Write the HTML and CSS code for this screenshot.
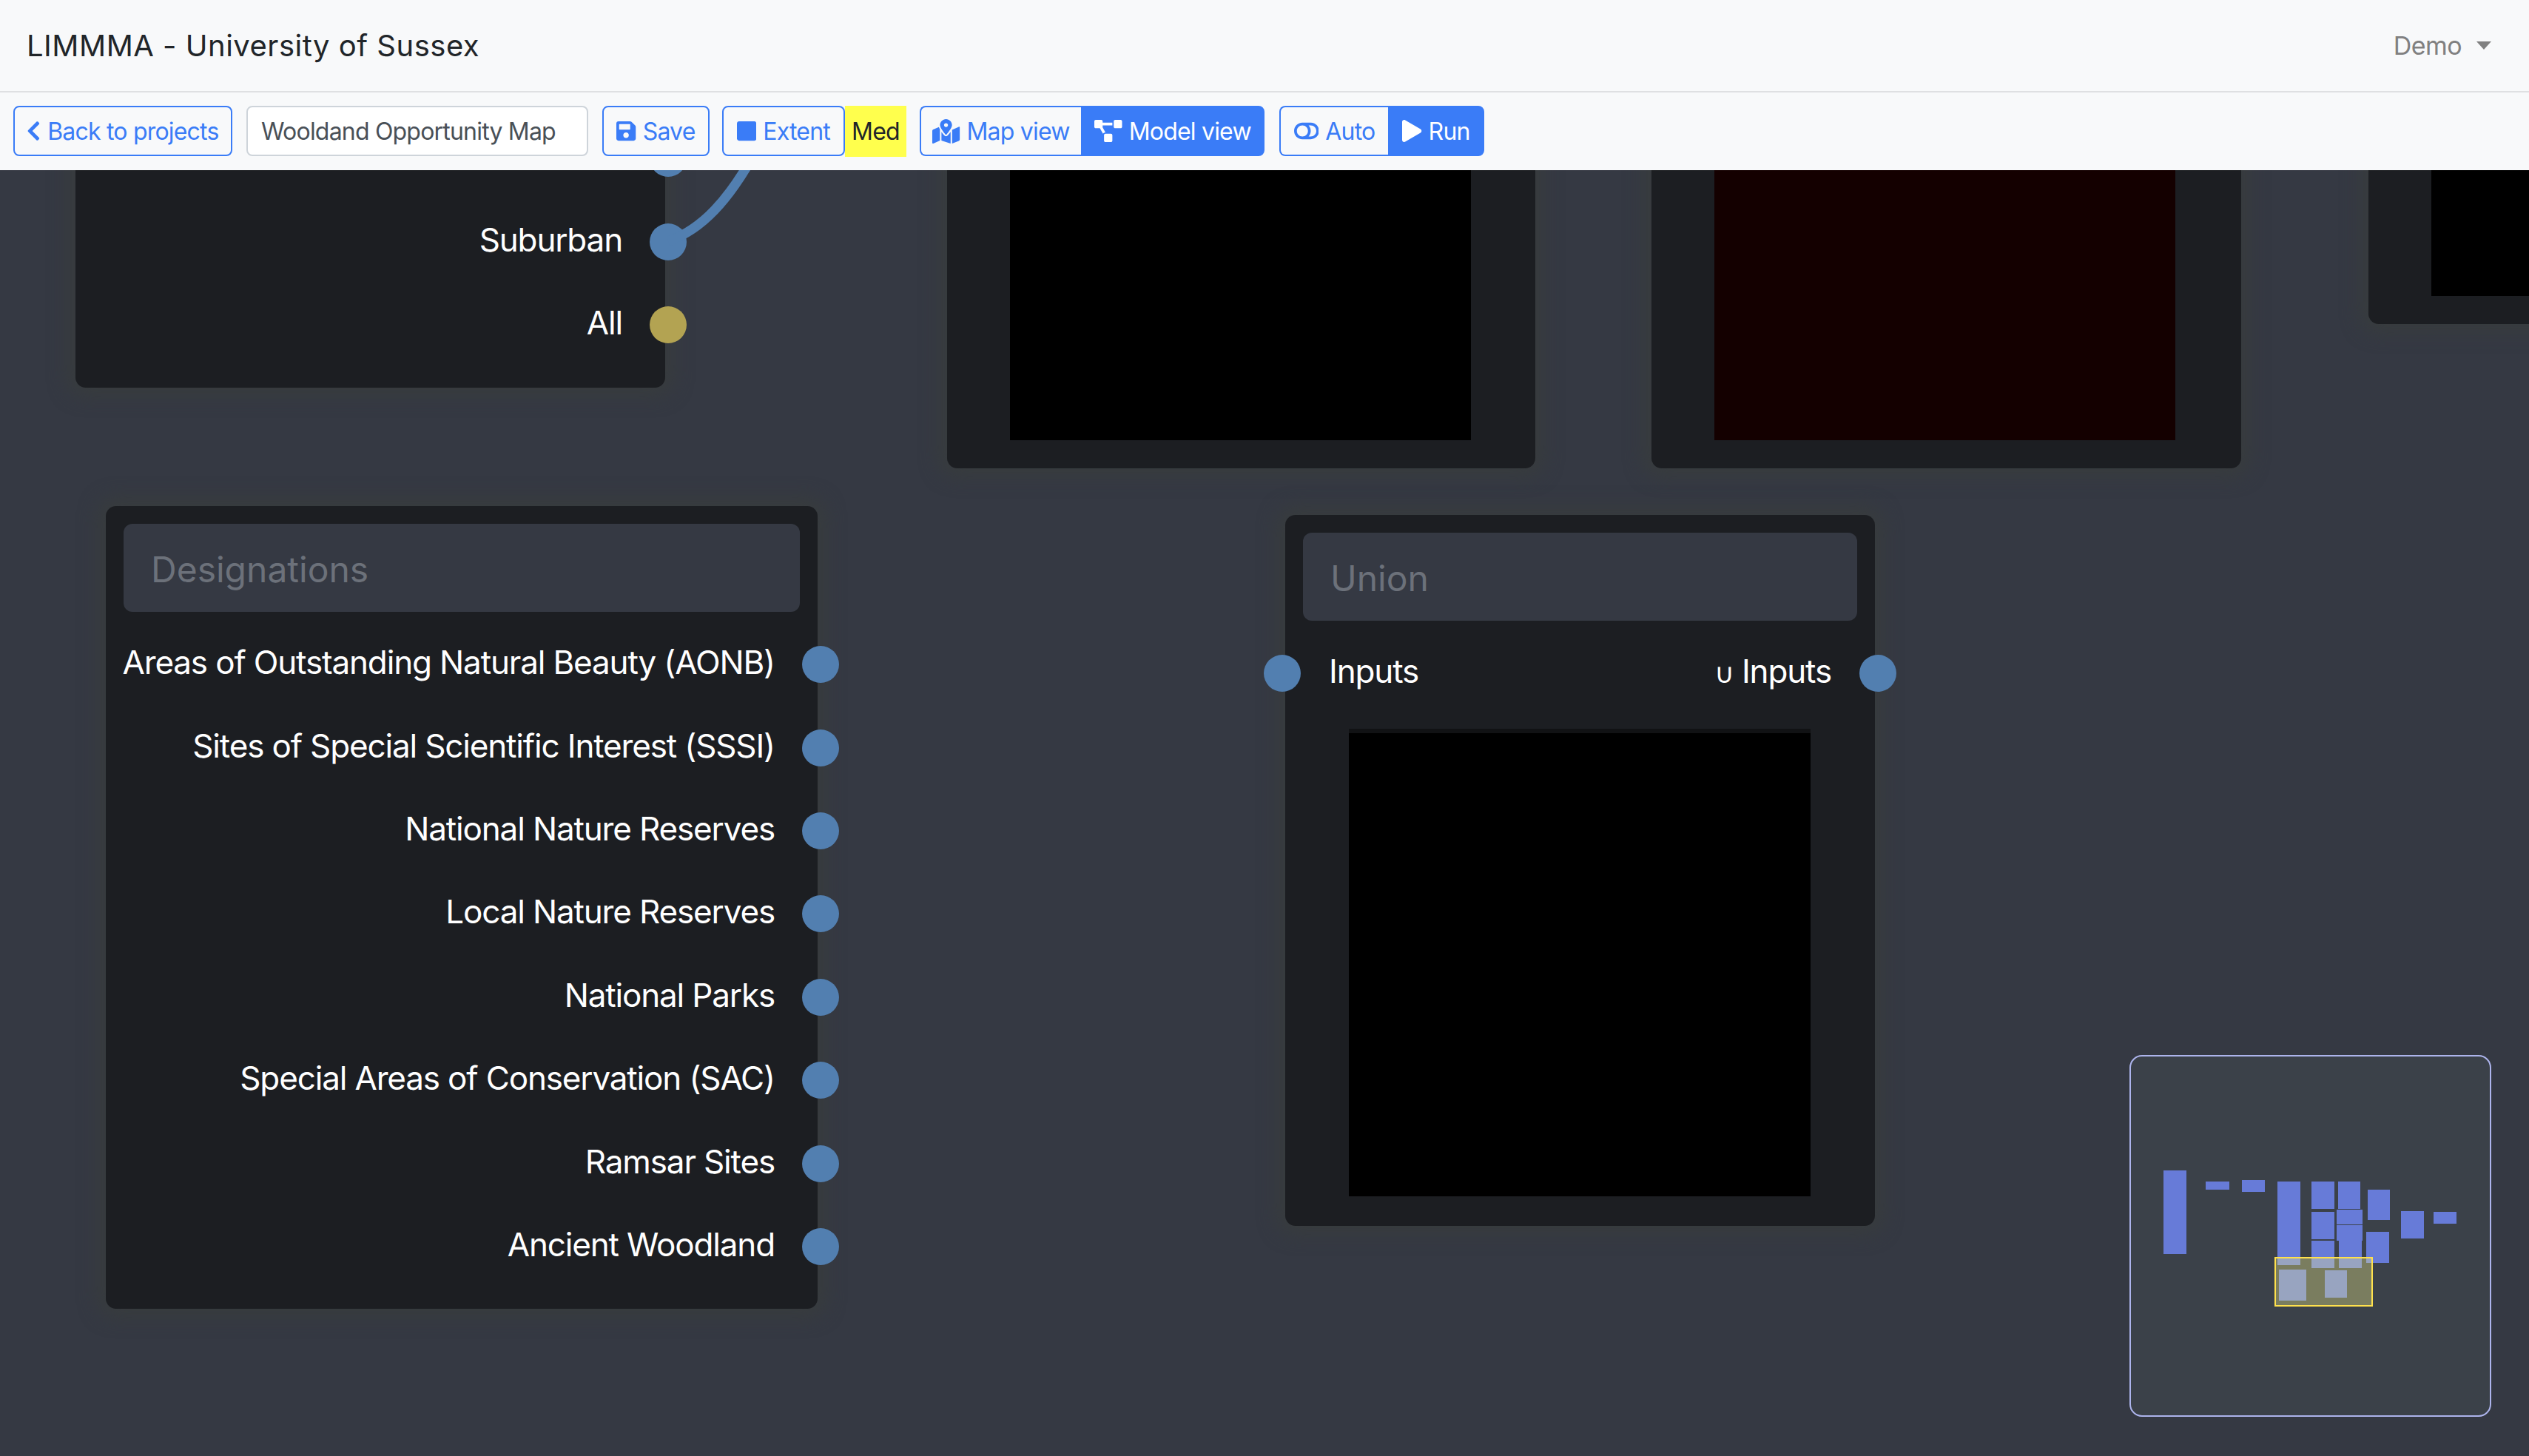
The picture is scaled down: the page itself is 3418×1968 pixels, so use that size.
FILE: index.html
```html
<!DOCTYPE html>
<html lang="en">
<head>
  <meta charset="UTF-8">
  <title>LIMMMA - University of Sussex</title>
  <link rel="stylesheet" href="styles.css">
</head>
<body>
  <nav class="navbar">
    <span class="brand">LIMMMA - University of Sussex</span>
    <span class="user-menu">Demo <i class="caret"></i></span>
  </nav>

  <div class="toolbar">
    <button class="btn btn-back">
      <svg class="icon" viewBox="0 0 320 512"><path d="M34.52 239.03L228.87 44.69c9.37-9.37 24.57-9.37 33.94 0l22.67 22.67c9.36 9.36 9.37 24.52.04 33.9L131.49 256l154.02 154.75c9.34 9.38 9.32 24.54-.04 33.9l-22.67 22.67c-9.37 9.37-24.57 9.37-33.94 0L34.52 272.97c-9.37-9.37-9.37-24.57 0-33.94z"/></svg>
      Back to projects
    </button>
    <input class="name-input" type="text" value="Wooldand Opportunity Map">
    <button class="btn btn-save">
      <svg class="icon" viewBox="0 0 448 512"><path d="M433.941 129.941l-83.882-83.882A48 48 0 0 0 316.118 32H48C21.49 32 0 53.49 0 80v352c0 26.51 21.49 48 48 48h352c26.51 0 48-21.49 48-48V163.882a48 48 0 0 0-14.059-33.941zM224 416c-35.346 0-64-28.654-64-64 0-35.346 28.654-64 64-64s64 28.654 64 64c0 35.346-28.654 64-64 64zm96-304.52V212c0 6.627-5.373 12-12 12H76c-6.627 0-12-5.373-12-12V108c0-6.627 5.373-12 12-12h228.52c3.183 0 6.235 1.264 8.485 3.515l3.48 3.48A11.996 11.996 0 0 1 320 111.48z"/></svg>
      Save
    </button>
    <div class="extent">
      <button class="btn btn-extent">
        <svg class="icon" viewBox="0 0 448 512"><path d="M400 32H48C21.5 32 0 53.5 0 80v352c0 26.5 21.5 48 48 48h352c26.5 0 48-21.5 48-48V80c0-26.5-21.5-48-48-48z"/></svg>
        Extent
      </button>
      <span class="badge-med">Med</span>
    </div>
    <div class="btn-group">
      <button class="btn btn-map">
        <svg class="icon icon-lg" viewBox="0 0 576 512"><path d="M288 0c-69.59 0-126 56.41-126 126 0 56.26 82.35 158.8 113.9 196.02 6.39 7.54 17.82 7.54 24.2 0C331.65 284.8 414 182.26 414 126 414 56.41 357.59 0 288 0zm0 168c-23.2 0-42-18.8-42-42s18.8-42 42-42 42 18.8 42 42-18.8 42-42 42zM20.12 215.95A32.006 32.006 0 0 0 0 245.66v250.32c0 11.32 11.43 19.06 21.94 14.86L160 448V214.92c-8.84-15.98-16.07-31.54-21.25-46.42L20.12 215.95zM288 359.67c-14.07 0-27.38-6.18-36.51-16.96-19.66-23.2-40.57-49.62-59.49-76.72V448l192 64V266c-18.92 27.09-39.82 53.52-59.49 76.72-9.13 10.77-22.44 16.95-36.51 16.95zm266.06-198.51L416 224v288l139.88-55.95A31.996 31.996 0 0 0 576 426.34V176.02c0-11.32-11.43-19.06-21.94-14.86z"/></svg>
        Map view
      </button>
      <button class="btn btn-model active">
        <svg class="icon" viewBox="0 0 640 512"><path d="M384 320H256c-17.67 0-32 14.33-32 32v128c0 17.67 14.33 32 32 32h128c17.67 0 32-14.33 32-32V352c0-17.67-14.33-32-32-32zM192 32c0-17.67-14.33-32-32-32H32C14.33 0 0 14.33 0 32v128c0 17.67 14.33 32 32 32h95.72l73.16 128.04C211.98 300.98 232.4 288 256 288h.28L192 175.51V128h224V64H192V32zM608 0H480c-17.67 0-32 14.33-32 32v128c0 17.67 14.33 32 32 32h128c17.67 0 32-14.33 32-32V32c0-17.67-14.33-32-32-32z"/></svg>
        Model view
      </button>
    </div>
    <div class="btn-group run-group">
      <button class="btn btn-auto">
        <svg class="icon" viewBox="0 0 576 512"><path d="M384 64H192C85.961 64 0 149.961 0 256s85.961 192 192 192h192c106.039 0 192-85.961 192-192S490.039 64 384 64zM64 256c0-70.741 57.249-128 128-128 70.741 0 128 57.249 128 128 0 70.741-57.249 128-128 128-70.741 0-128-57.249-128-128zm320 128h-48.896c65.215-72.938 65.195-183.084 0-256H384c70.741 0 128 57.249 128 128 0 70.741-57.249 128-128 128z"/></svg>
        Auto
      </button>
      <button class="btn btn-run active">
        <svg class="icon" viewBox="0 0 448 512"><path d="M424.4 214.7L72.4 6.6C43.8-10.3 0 6.1 0 47.9V464c0 37.5 40.7 60.1 72.4 41.3l352-208c31.4-18.5 31.5-64.1 0-82.6z"/></svg>
        Run
      </button>
    </div>
  </div>

  <main class="canvas">
    <div class="node node-classes">
      <div class="row row-out"><span class="port"></span></div>
      <div class="row row-out"><span class="label">Suburban</span><span class="port"></span></div>
      <div class="row row-out"><span class="label">All</span><span class="port port-all"></span></div>
    </div>

    <div class="node node-preview node-preview-a"><div class="preview"></div></div>
    <div class="node node-preview node-preview-b"><div class="preview preview-red"></div></div>
    <div class="node node-preview node-preview-c"><div class="preview"></div></div>

    <div class="node node-designations">
      <div class="node-title">Designations</div>
      <div class="row row-out"><span class="label">Areas of Outstanding Natural Beauty (AONB)</span><span class="port"></span></div>
      <div class="row row-out"><span class="label">Sites of Special Scientific Interest (SSSI)</span><span class="port"></span></div>
      <div class="row row-out"><span class="label">National Nature Reserves</span><span class="port"></span></div>
      <div class="row row-out"><span class="label">Local Nature Reserves</span><span class="port"></span></div>
      <div class="row row-out"><span class="label">National Parks</span><span class="port"></span></div>
      <div class="row row-out"><span class="label">Special Areas of Conservation (SAC)</span><span class="port"></span></div>
      <div class="row row-out"><span class="label">Ramsar Sites</span><span class="port"></span></div>
      <div class="row row-out"><span class="label">Ancient Woodland</span><span class="port"></span></div>
    </div>

    <div class="node node-union">
      <div class="node-title">Union</div>
      <div class="row row-both">
        <span class="port port-in"></span>
        <span class="label">Inputs</span>
        <span class="label label-right"><small class="symbol">∪</small> Inputs</span>
        <span class="port"></span>
      </div>
      <div class="preview preview-union"></div>
    </div>

    <svg class="wires" width="1100" height="120" viewBox="0 230 1100 120">
      <path d="M903 326C950 310 985 268 1016 214" fill="none" stroke="#527fb0" stroke-width="13"/>
    </svg>

    <div class="minimap">
      <svg class="minimap-svg" viewBox="61 54 1453 1454" shape-rendering="crispEdges">
        <g fill="#677bd8">
          <rect x="192" y="516" width="93" height="339"/>
          <rect x="363" y="561" width="96" height="33"/>
          <rect x="510" y="555" width="93" height="48"/>
          <rect x="654" y="561" width="93" height="339"/>
          <rect x="792" y="561" width="93" height="111"/>
          <rect x="900" y="561" width="90" height="111"/>
          <rect x="1020" y="594" width="90" height="123"/>
          <rect x="792" y="684" width="93" height="111"/>
          <rect x="894" y="675" width="105" height="60"/>
          <rect x="894" y="738" width="105" height="63"/>
          <rect x="792" y="801" width="93" height="111"/>
          <rect x="903" y="801" width="93" height="111"/>
          <rect x="1014" y="765" width="93" height="126"/>
          <rect x="1155" y="681" width="93" height="111"/>
          <rect x="1287" y="684" width="93" height="48"/>
          <rect x="660" y="918" width="111" height="126"/>
          <rect x="846" y="921" width="90" height="111"/>
        </g>
        <rect x="645" y="870" width="393" height="195" fill="#fffd90" fill-opacity="0.32" stroke="#ffe14d" stroke-width="6"/>
      </svg>
    </div>
  </main>
</body>
</html>
```

FILE: styles.css
```css
* {
  box-sizing: border-box;
}
html, body {
  height: 100%;
}
body {
  margin: 0;
  display: flex;
  flex-direction: column;
  overflow: hidden;
  font-family: Inter, "Liberation Sans", sans-serif;
  background-color: #353943;
}

/* top bars */
.navbar {
  height: 125px;
  flex: none;
  display: flex;
  justify-content: space-between;
  align-items: center;
  padding: 0 51px 0 36px;
  background-color: #f8f9fa;
  border-bottom: 2px solid #dfe0e2;
}
.brand {
  font-size: 40px;
  letter-spacing: 0.5px;
  color: #212529;
}
.user-menu {
  font-size: 34px;
  letter-spacing: -0.6px;
  color: #808080;
  display: flex;
  align-items: center;
  gap: 20px;
}
.caret {
  width: 0;
  height: 0;
  border-top: 11px solid #808080;
  border-left: 10px solid transparent;
  border-right: 10px solid transparent;
}
.toolbar {
  height: 105px;
  flex: none;
  display: flex;
  align-items: flex-start;
  padding: 18px 18px 0;
  background-color: #f8f9fa;
}
.btn {
  height: 68px;
  display: flex;
  align-items: center;
  justify-content: center;
  gap: 9px;
  padding: 0;
  font-family: inherit;
  font-size: 32px;
  letter-spacing: -0.8px;
  color: #3a7cf7;
  background-color: transparent;
  border: 2px solid #3a7cf7;
  border-radius: 8px;
  white-space: nowrap;
}
.btn.active {
  color: #fff;
  background-color: #3a7cf7;
}
.btn-back { width: 296px; }
.btn-save { width: 145px; }
.btn-extent { width: 166px; }
.btn-map { width: 218px; }
.btn-model { width: 248px; }
.btn-auto { width: 147px; }
.btn-run { width: 130px; }

.icon {
  height: 30px;
  flex: none;
  fill: currentColor;
}
.icon-lg {
  height: 33px;
}
.name-input {
  width: 462px;
  height: 68px;
  margin: 0 19px;
  padding: 0 18px;
  font-family: inherit;
  font-size: 32px;
  letter-spacing: -0.8px;
  color: #495057;
  background-color: #fff;
  border: 2px solid #ced4da;
  border-radius: 8px;
}
.extent {
  display: flex;
  margin: 0 18px 0 17px;
}
.badge-med {
  width: 83px;
  height: 69px;
  display: flex;
  align-items: center;
  justify-content: center;
  font-size: 32px;
  letter-spacing: -0.8px;
  color: #212529;
  background-color: #ffff4d;
}
.btn-group {
  display: flex;
}
.btn-group .btn:first-child {
  border-radius: 8px 0 0 8px;
  border-right: none;
}
.btn-group .btn:last-child {
  border-radius: 0 8px 8px 0;
}
.run-group {
  margin-left: 20px;
}

/* canvas */
.canvas {
  position: relative;
  flex: 1;
  overflow: hidden;
}
.wires {
  position: absolute;
  left: 0;
  top: 0;
  pointer-events: none;
}
.node {
  position: absolute;
  background-color: #1c1e22;
  border-radius: 14px;
  box-shadow: 0 0 24px 12px #383c3e;
}
.node-title {
  height: 119px;
  margin: 24px 24px 15px;
  padding: 4px 0 0 37px;
  display: flex;
  align-items: center;
  font-size: 48px;
  color: #6c717a;
  background-color: #353943;
  border-radius: 12px;
}
.row {
  height: 112.4px;
  display: flex;
  align-items: center;
  font-size: 44px;
  letter-spacing: -1.15px;
  color: #fff;
}
.label {
  margin-bottom: 6px;
  white-space: nowrap;
}
.row-out {
  justify-content: flex-end;
}
.row-both {
  justify-content: space-between;
}
.port {
  width: 50px;
  height: 50px;
  flex: none;
  border-radius: 50%;
  background-color: #527fb0;
}
.row-out .label {
  margin-right: 37px;
}
.row-out .port,
.row-both .port {
  margin-right: -29px;
}
.row-both .port-in {
  margin: 0 38px 0 -29px;
}
.port-all {
  background-color: #b3a352;
}
.label-right {
  margin-left: auto;
  margin-right: 38px;
}
.symbol {
  font-size: 37px;
}

.preview {
  width: 623px;
  height: 625px;
  background-color: #000;
}
.preview-red {
  background-color: #140000;
}
.preview-union {
  width: 624px;
  height: 632px;
  margin: 19px 0 0 86px;
  border-top: 6px solid #111214;
}

.node-classes {
  left: 102px;
  top: -120px;
  width: 797px;
  height: 414px;
  padding-top: 48px;
}
.node-preview {
  top: -230px;
  height: 633px;
  padding: 0 87px 38px 85px;
  display: flex;
  align-items: flex-end;
}
.node-preview-a {
  left: 1280px;
  width: 795px;
}
.node-preview-b {
  left: 2232px;
  width: 797px;
}
.node-preview-c {
  left: 3201px;
  top: -230px;
  height: 438px;
  width: 400px;
}
.node-designations {
  left: 143px;
  top: 454px;
  width: 962px;
  height: 1085px;
}
.node-union {
  left: 1737px;
  top: 466px;
  width: 797px;
  height: 961px;
}

.minimap {
  position: absolute;
  left: 2878px;
  top: 1196px;
  width: 489px;
  height: 489px;
  background-color: #3b4149;
  border: 2px solid #adb4ec;
  border-radius: 17px;
}
.minimap-svg {
  display: block;
  width: 100%;
  height: 100%;
}
```
